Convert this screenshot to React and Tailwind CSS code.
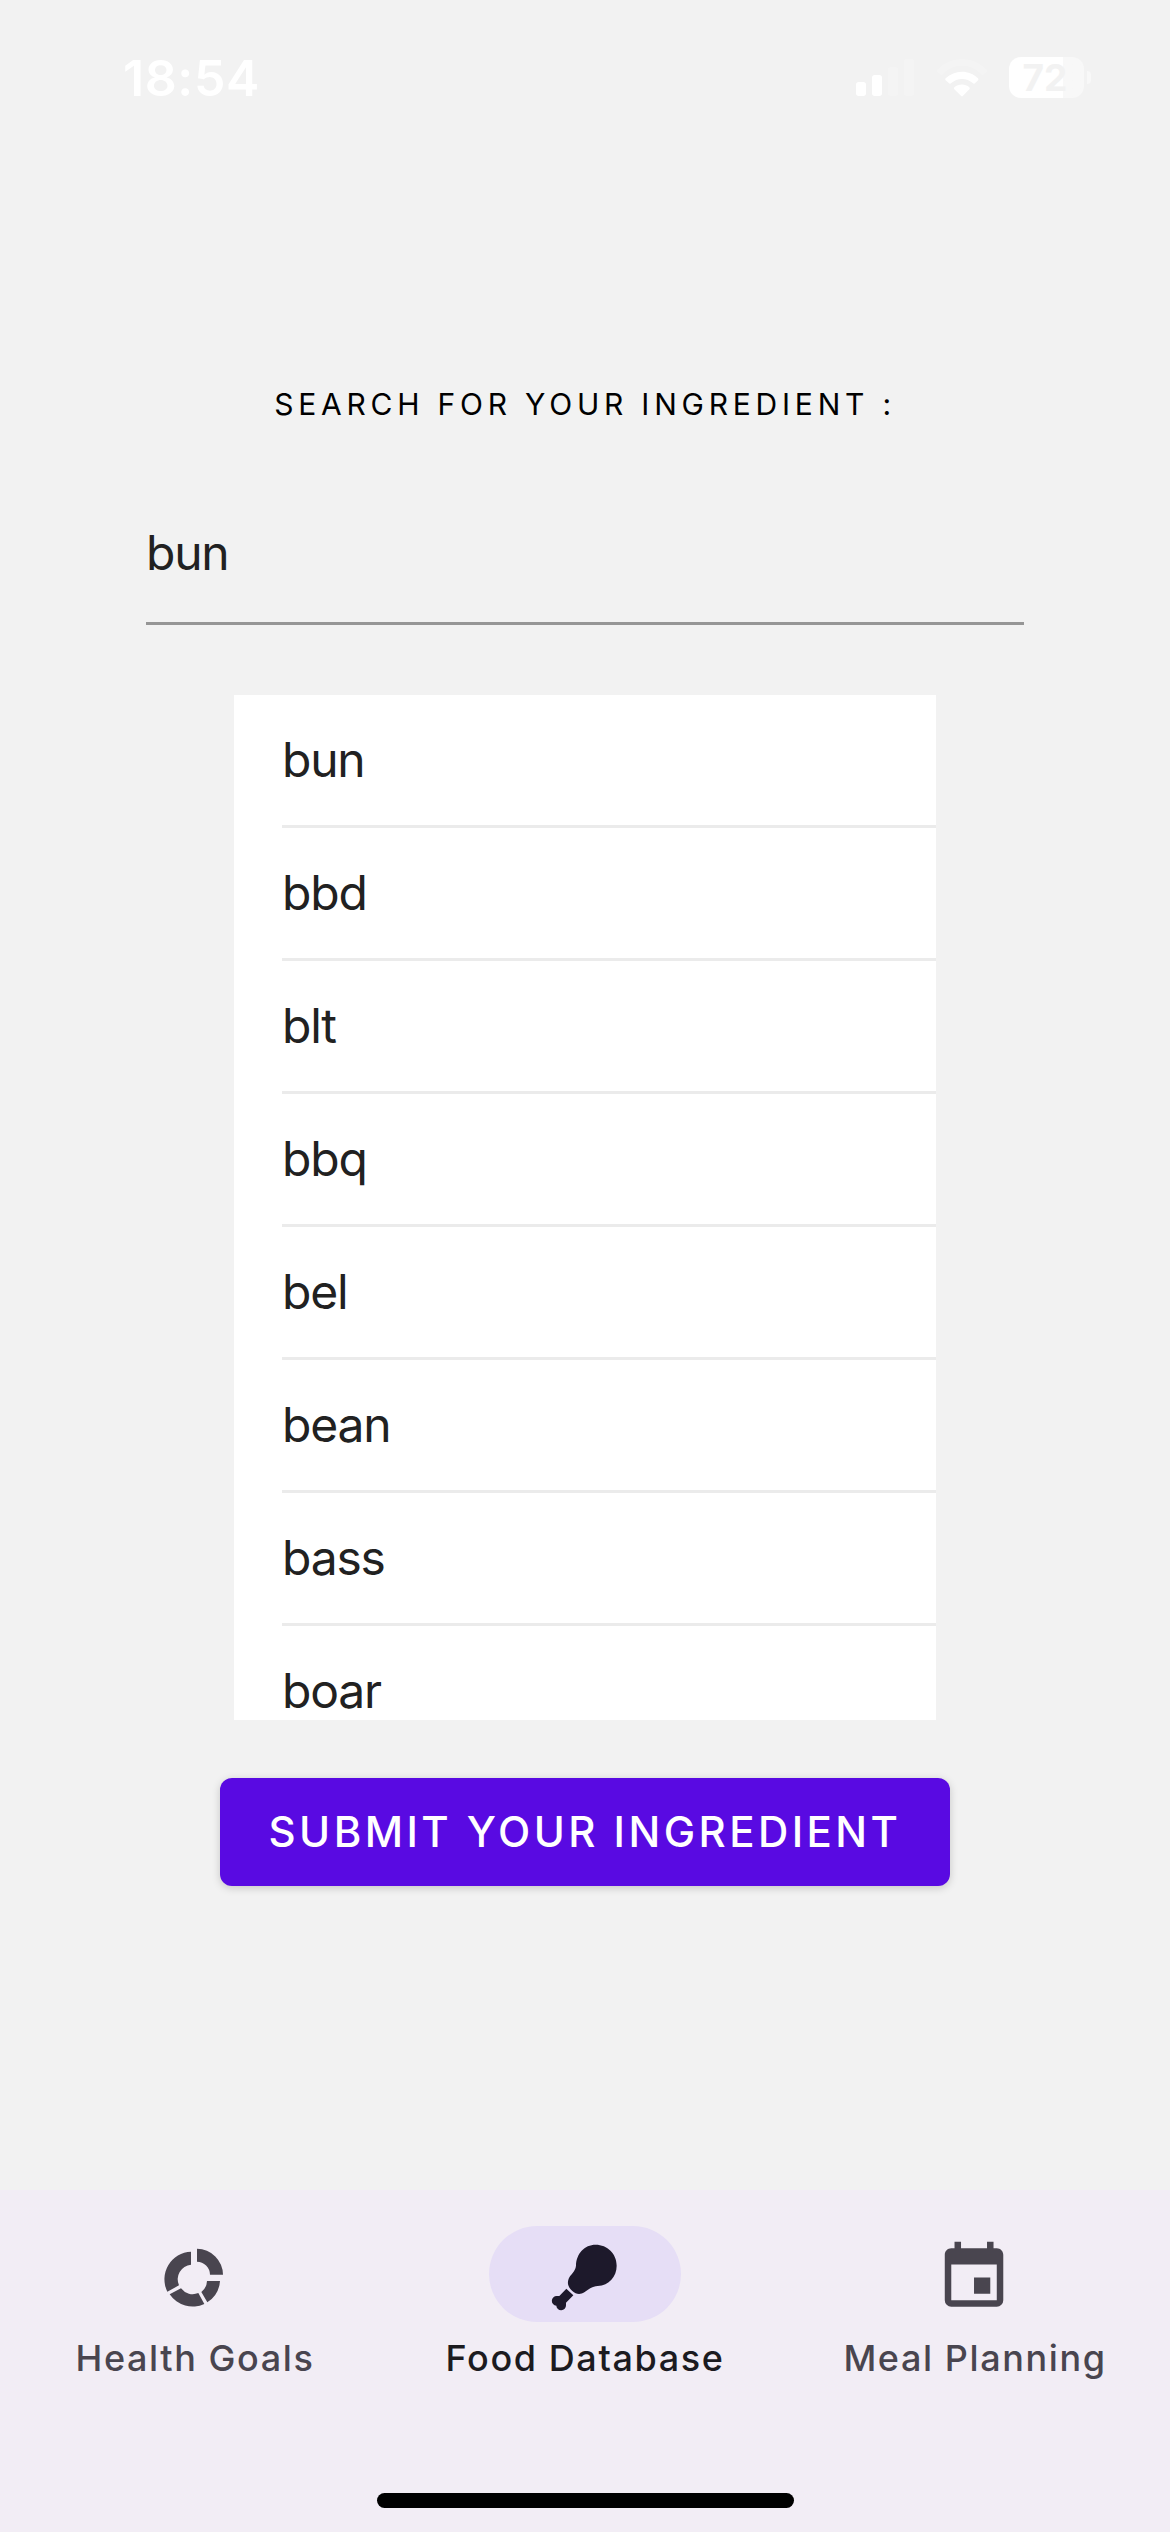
const ingredients = ['bun', 'bbd', 'blt', 'bbq', 'bel', 'bean', 'bass', 'boar'];

function StatusBar() {
  return (
    <header className="flex h-[156px] shrink-0 items-start justify-between pr-[79px] pl-[123px] text-white">
      <time className="mt-[48px] text-[50px] leading-[60px] font-semibold tracking-[0.6px]">18:54</time>
      <div className="mt-[57px] flex items-center">
        <svg className="mr-[22px] h-[41px] w-[59px]" viewBox="78 81 177 123" fill="currentColor" aria-hidden="true">
          <rect x="78" y="156" width="30" height="42" rx="8" />
          <rect x="126" y="135" width="30" height="63" rx="8" />
          <rect x="174" y="111" width="30" height="87" rx="8" opacity="0.2" />
          <rect x="222" y="86" width="30" height="112" rx="8" opacity="0.2" />
        </svg>
        <svg className="mr-[22px] h-[41px] w-[50px]" viewBox="320 81 150 123" fill="currentColor" aria-hidden="true">
          <path opacity="0.2" d="M321 119C363 76 427 76 469 119Q472 122 469 125L459 134Q456 136 453 133C420 99 370 99 337 133Q334 136 331 134L321 125Q318 122 321 119Z" />
          <path d="M346 145C373 119 417 119 443 145Q446 148 443 151L434 160Q431 162 428 160C409 143 381 143 362 160Q359 162 356 160L346 151Q343 148 346 145Z" />
          <path d="M372 172C385 161 405 161 417 172Q420 175 417 178L398 197Q395 200 392 197L372 178Q369 175 372 172Z" />
        </svg>
        <div className="flex h-[41px] w-[75px] items-center justify-center rounded-[12px] bg-linear-to-r from-white from-72% to-[#f8f8f8] to-72% text-[37px] leading-[41px] font-bold text-[#f2f2f2]">
          <span className="-ml-[3px]">72</span>
        </div>
        <div className="ml-[3px] h-[13px] w-[4px] rounded-r-full bg-[#f8f8f8]" />
      </div>
    </header>
  );
}

function DonutIcon() {
  return (
    <svg className="size-[78px]" viewBox="288 165 234 234" fill="currentColor" aria-hidden="true">
      <path d="M393 215V254A44 44 0 0 0 357 316L322 335A83 83 0 0 1 393 215Z" />
      <path d="M363 325A44 44 0 0 0 415 339L433 372A83 83 0 0 1 329 343Z" />
      <path d="M441 303H480A83 83 0 0 1 442 367L424 336A44 44 0 0 0 441 303Z" />
      <path d="M411 206A79 79 0 0 1 489 284H450A40 40 0 0 0 411 245Z" />
    </svg>
  );
}

function DrumstickIcon() {
  return (
    <svg className="size-[78px]" viewBox="348 165 234 234" fill="currentColor" aria-hidden="true">
      <path d="M497 194.500C532 194.500 560 222 560 257C560 290 537 316 503 318C485 320 475 328 463 337C450 345 438 343 427 333C414 322 411 309 416 296C421 283 436 276 438 257C439 222 463 194.500 497 194.500Z" />
      <path d="M409 326L430 346L408 368V376A14.500 14.500 0 0 1 379 377A14.500 14.500 0 1 1 381 348H388Z" />
    </svg>
  );
}

function CalendarIcon() {
  return (
    <svg className="size-[78px]" viewBox="0.3 -1.05 24 24" fill="currentColor" aria-hidden="true">
      <path d="M19 19H5V8H19M16 1V3H8V1H6V3H5C3.890 3 3 3.890 3 5V19A2 2 0 0 0 5 21H19A2 2 0 0 0 21 19V5C21 3.890 20.100 3 19 3H18V1M17 12H12V17H17V12Z" />
    </svg>
  );
}

const tabs = [
  { label: 'Health Goals', Icon: DonutIcon },
  { label: 'Food Database', Icon: DrumstickIcon, active: true },
  { label: 'Meal Planning', Icon: CalendarIcon },
];

function BottomNav() {
  return (
    <nav className="flex h-[342px] shrink-0 flex-col items-center justify-between bg-[#f2edf5] pt-[36px] pb-[24px]">
      <div className="grid w-full grid-cols-3">
        {tabs.map(({ label, Icon, active }) => (
          <button
            key={label}
            className={active ? 'flex flex-col items-center text-[#1c1b1f]' : 'flex flex-col items-center text-[#49454f]'}
          >
            <span
              className={
                active
                  ? 'flex h-[96px] w-[192px] items-center justify-center rounded-full bg-[#e6def6] text-[#1d192b]'
                  : 'flex h-[96px] w-[192px] items-center justify-center'
              }
            >
              <Icon />
            </span>
            <span className="mt-[12px] text-[36px] leading-[48px] font-medium tracking-[1.6px] whitespace-nowrap">
              {label}
            </span>
          </button>
        ))}
      </div>
      <div className="h-[15px] w-[417px] rounded-full bg-black" />
    </nav>
  );
}

export default function App() {
  return (
    <div className="flex h-[2532px] w-[1170px] flex-col overflow-hidden bg-[#f2f2f2] font-[Inter,sans-serif]">
      <StatusBar />
      <main className="flex flex-1 flex-col items-center pt-[228px]">
        <h1 className="text-[30px] leading-[40px] tracking-[4.78px] whitespace-nowrap text-black">
          SEARCH FOR YOUR INGREDIENT :
        </h1>
        <input
          aria-label="Ingredient"
          defaultValue="bun"
          className="mt-[74px] h-[127px] w-[878px] border-b-[3px] border-[#969696] bg-transparent pt-[16px] pb-[32px] text-[48px] tracking-[-1.2px] text-[#212121] outline-none"
        />
        <ul className="mt-[70px] h-[1025px] w-[702px] overflow-hidden bg-white pl-[48px]">
          {ingredients.map((name) => (
            <li
              key={name}
              className="h-[133px] border-b-[3px] border-[#ebebeb] text-[48px] leading-[129px] tracking-[-1.2px] text-[#212121]"
            >
              {name}
            </li>
          ))}
        </ul>
        <button className="mt-[58px] h-[108px] w-[730px] rounded-[12px] bg-[#590ae2] text-[42px] leading-[108px] font-[450] tracking-[3.45px] whitespace-nowrap text-white shadow-[0_2px_8px_rgba(0,0,0,0.18)]">
          SUBMIT YOUR INGREDIENT
        </button>
      </main>
      <BottomNav />
    </div>
  );
}
